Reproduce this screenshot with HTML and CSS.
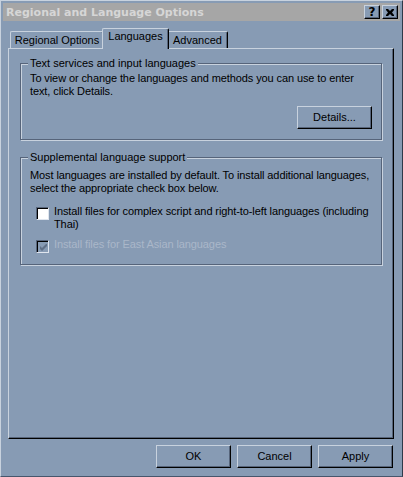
FILE: index.html
```html
<!DOCTYPE html>
<html>
<head>
<meta charset="UTF-8">
<title>Regional and Language Options</title>
<link rel="stylesheet" href="styles.css">
</head>
<body>
<div class="window">
  <div class="titlebar">
    <span class="title">Regional and Language Options</span>
    <span class="capbtn help">?</span>
    <span class="capbtn close">
      <svg width="8" height="7" viewBox="0 0 8 7"><path d="M0 0h2l2 2 2-2h2v1L6 3.5 8 6v1H6L4 5 2 7H0V6l2-2.5L0 1z" fill="#000"/></svg>
    </span>
  </div>

  <div class="tabs">
    <div class="tab tab-regional">Regional Options</div>
    <div class="tab tab-active">Languages</div>
    <div class="tab tab-advanced">Advanced</div>
  </div>

  <div class="panel">
    <fieldset class="group group-text">
      <legend>Text services and input languages</legend>
      <p>To view or change the languages and methods you can use to enter<br>text, click Details.</p>
      <div class="btnrow"><span class="btn">Details...</span></div>
    </fieldset>

    <fieldset class="group group-supp">
      <legend>Supplemental language support</legend>
      <p>Most languages are installed by default. To install additional languages,<br>select the appropriate check box below.</p>
      <div class="check check-complex">
        <span class="box"></span>
        <span class="label">Install files for complex script and right-to-left languages (including<br>Thai)</span>
      </div>
      <div class="check check-asian disabled">
        <span class="box">
          <svg width="7" height="7" viewBox="0 0 7 7"><path d="M0 2L2 4L7 -1V2L2 7L0 5Z" fill="#5f6f86"/></svg>
        </span>
        <span class="label">Install files for East Asian languages</span>
      </div>
    </fieldset>
  </div>

  <div class="buttons">
    <span class="btn">OK</span>
    <span class="btn">Cancel</span>
    <span class="btn">Apply</span>
  </div>
</div>
</body>
</html>
```

FILE: styles.css
```css
body { margin: 0; font-family: "Liberation Sans", Arial, sans-serif; font-size: 11px; line-height: 13px; color: #000; }
.window { width: 403px; height: 477px; box-sizing: border-box; padding: 2px; background: #879bb4;
  border: 1px solid #c8d2de; border-right-color: #2e3a4a; border-bottom-color: #46566c; }

.titlebar { height: 18px; display: flex; align-items: center; background: #a6a6a6; padding-right: 2px; }
.titlebar .title { flex: 1; padding-left: 3px; font-family: "DejaVu Sans", sans-serif; font-weight: bold; font-size: 11px; color: #d6d6d6; }
.capbtn { width: 16px; height: 14px; box-sizing: border-box; display: flex; align-items: center; justify-content: center;
  background: #879bb4; border: 1px solid #c8d2de; border-right-color: #000; border-bottom-color: #000;
  box-shadow: inset -1px -1px 0 #56647a; font-weight: bold; font-size: 12px; font-family: "DejaVu Sans", sans-serif; }
.capbtn.close { margin-left: 2px; }

.tabs { display: flex; align-items: flex-end; height: 20px; margin-top: 7px; padding-left: 7px; }
.tab { box-sizing: border-box; height: 17px; padding-top: 2px; text-align: center;
  border: 1px solid #c8d2de; border-bottom: none; border-right-color: #000; border-radius: 2px 2px 0 0;
  box-shadow: inset -1px 0 0 #56647a; }
.tab-regional { width: 94px; }
.tab-active { width: 67px; height: 21px; margin: 0 -2px -1px; position: relative; z-index: 1; background: #879bb4; padding-top: 1px; }
.tab-advanced { width: 61px; }

.panel { width: 386px; height: 391px; box-sizing: border-box; margin-left: 5px; padding: 8px 0 0 11px;
  border: 1px solid #c8d2de; border-right-color: #000; border-bottom-color: #000; box-shadow: inset -1px -1px 0 #56647a; }

.group { width: 362px; box-sizing: border-box; margin: 0; min-width: 0; padding: 2px 9px 10px;
  border: 1px solid #56647a; box-shadow: inset 1px 1px 0 #c8d2de, 1px 1px 0 #c8d2de; }
.group legend { padding: 0 2px; margin-left: -2px; background: #879bb4; line-height: 13px; }
.group p, .check .label { margin: 0; white-space: nowrap; letter-spacing: -0.1px; }
.group-supp { margin-top: 11px; padding-top: 5px; padding-bottom: 11px; }

.btnrow { display: flex; justify-content: flex-end; margin-top: 8px; }
.btn { width: 75px; height: 23px; box-sizing: border-box; display: flex; align-items: center; justify-content: center;
  border: 1px solid #c8d2de; border-right-color: #000; border-bottom-color: #000; box-shadow: inset -1px -1px 0 #56647a; }

.check { display: flex; gap: 5px; padding-left: 6px; }
.check-complex { margin-top: 10px; }
.check-asian { margin-top: 7px; }
.check .box { width: 13px; height: 13px; box-sizing: border-box; margin-top: 2px; flex: none; background: #fff;
  border: 1px solid #56647a; border-right-color: #dfe5ee; border-bottom-color: #dfe5ee; box-shadow: inset 1px 1px 0 #000;
  display: flex; align-items: center; justify-content: center; }
.check.disabled .box { background: #879bb4; }
.check.disabled .box svg { margin: 1px 0 0 1px; }
.check.disabled .label { color: #aab7c9; }

.buttons { display: flex; justify-content: flex-end; gap: 6px; margin-top: 6px; padding-right: 7px; }
```
